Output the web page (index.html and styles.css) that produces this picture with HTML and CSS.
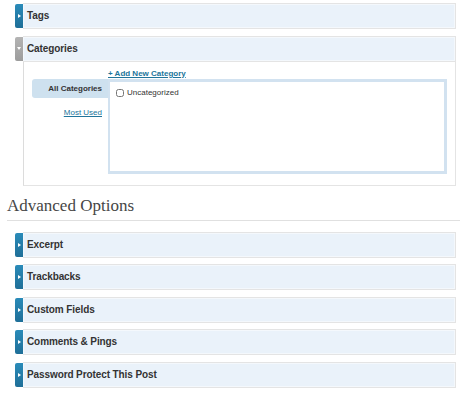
FILE: index.html
```html
<!DOCTYPE html>
<html lang="en">
  <head>
    <meta charset="UTF-8" />
    <title>Post options</title>
    <link rel="stylesheet" href="styles.css">
  </head>
  <body>
    <div class="page">
      <div class="postbox">
        <div class="bar">
          <span class="handle"><i class="arrow"></i></span>
          <h3 class="title">Tags</h3>
        </div>
      </div>

      <div class="postbox open">
        <div class="bar">
          <span class="handle"><i class="arrow"></i></span>
          <h3 class="title">Categories</h3>
        </div>
        <div class="inside">
          <a class="add-new" href="#">+ Add New Category</a>
          <div class="cats">
            <ul class="tabs">
              <li class="active">All Categories</li>
              <li><a href="#">Most Used</a></li>
            </ul>
            <div class="list">
              <label class="check"><input type="checkbox" /> Uncategorized</label>
            </div>
          </div>
        </div>
      </div>

      <h2 class="section-title">Advanced Options</h2>

      <div class="postbox">
        <div class="bar">
          <span class="handle"><i class="arrow"></i></span>
          <h3 class="title">Excerpt</h3>
        </div>
      </div>
      <div class="postbox">
        <div class="bar">
          <span class="handle"><i class="arrow"></i></span>
          <h3 class="title">Trackbacks</h3>
        </div>
      </div>
      <div class="postbox">
        <div class="bar">
          <span class="handle"><i class="arrow"></i></span>
          <h3 class="title">Custom Fields</h3>
        </div>
      </div>
      <div class="postbox">
        <div class="bar">
          <span class="handle"><i class="arrow"></i></span>
          <h3 class="title">Comments &amp; Pings</h3>
        </div>
      </div>
      <div class="postbox">
        <div class="bar">
          <span class="handle"><i class="arrow"></i></span>
          <h3 class="title">Password Protect This Post</h3>
        </div>
      </div>
    </div>
  </body>
</html>
```

FILE: styles.css
```css
* {
  padding: 0;
  margin: 0;
  box-sizing: border-box;
}

body {
  background: #fff;
  font-family: "Liberation Sans", sans-serif;
  color: #333;
}

.page {
  padding-top: 3px;
}

.postbox {
  margin-left: 15px;
  width: 441px;
  margin-bottom: 6.5px;
}

.bar {
  display: flex;
  height: 26px;
}

.handle {
  width: 8px;
  margin: 1px 0;
  background: linear-gradient(#2a8bb9, #1f6f98);
  border-radius: 2px 0 0 2px;
  display: flex;
  align-items: center;
  justify-content: center;
}

.arrow {
  width: 0;
  height: 0;
  border-top: 2.5px solid transparent;
  border-bottom: 2.5px solid transparent;
  border-left: 3px solid #fff;
}

.open .handle {
  background: linear-gradient(#b4b4b4, #9c9c9c);
}

.open .arrow {
  border-left: 2.5px solid transparent;
  border-right: 2.5px solid transparent;
  border-top: 3px solid #fff;
  border-bottom: 0;
}

.title {
  flex: 1;
  border: 1px solid #e4e4e4;
  border-left: 0;
  background: #eaf2fa;
  box-shadow: inset 0 0 0 1px #f4f8fc;
  font: bold 10px/24px "Liberation Sans", sans-serif;
  letter-spacing: -0.1px;
  color: #333;
  padding-left: 4px;
}

.inside {
  margin-left: 8px;
  height: 124px;
  border: 1px solid #e4e4e4;
  border-top: 0;
  border-left: 1px solid #dcdcdc;
  padding-top: 7px;
}

.add-new {
  display: block;
  margin-left: 84px;
  font: bold 8px/10px "Liberation Sans", sans-serif;
  color: #21759b;
}

.cats {
  display: flex;
  margin-left: 8px;
}

.tabs {
  list-style: none;
  width: 76px;
  text-align: right;
}

.tabs li {
  font: 8px/19px "Liberation Sans", sans-serif;
  padding-right: 6px;
  margin-bottom: 5px;
}

.tabs li.active {
  background: #cee1ef;
  font-weight: bold;
  border-radius: 3px 0 0 3px;
}

.tabs a {
  color: #21759b;
}

.list {
  width: 339px;
  height: 95px;
  border: 3px solid #d2e2f0;
  border-left-width: 2px;
  padding: 5px 6px;
}

.check {
  display: flex;
  align-items: center;
  font: 8px/12px "Liberation Sans", sans-serif;
  color: #333;
}

.check input {
  width: 8px;
  height: 8px;
  margin-right: 3px;
}

.section-title {
  font: normal 17px/24px "Liberation Serif", serif;
  color: #464646;
  margin: 0 6px 11px 7px;
  padding: 1.5px 0 2px;
  border-bottom: 1px solid #e0e0e0;
  width: 453px;
}
```
